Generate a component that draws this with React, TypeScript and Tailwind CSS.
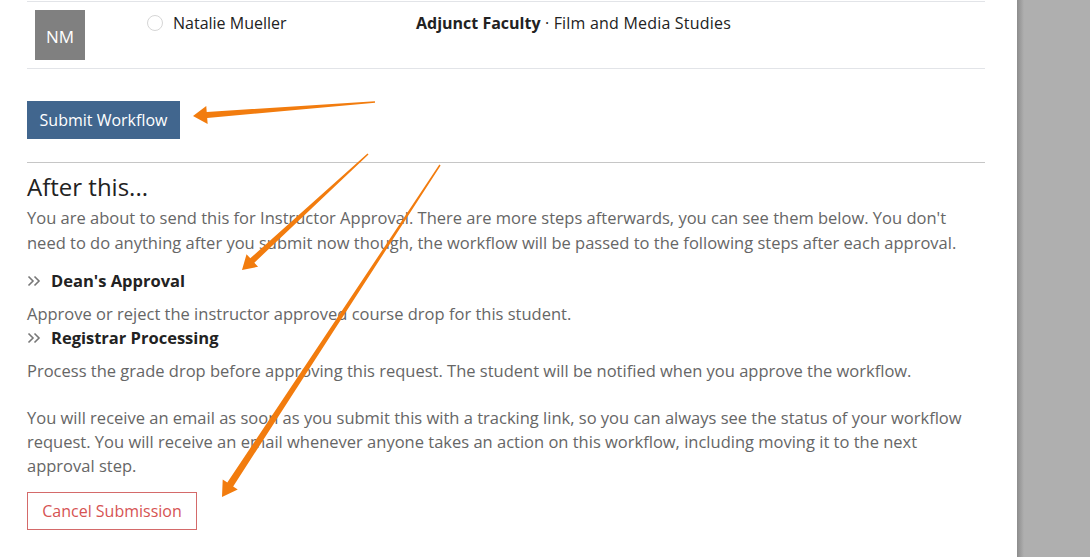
import React from 'react';

type Pt = [number, number];

// tapered annotation arrow: thin tail, wider shaft near head, triangular head
function arrowPoints(tail: Pt, tip: Pt, tailW: number, neckW: number, headW: number, headL: number) {
  const dx = tip[0] - tail[0];
  const dy = tip[1] - tail[1];
  const len = Math.hypot(dx, dy);
  const ux = dx / len;
  const uy = dy / len;
  const nx = -uy;
  const ny = ux;
  const neck: Pt = [tip[0] - ux * headL, tip[1] - uy * headL];
  const p = (base: Pt, w: number): string => `${base[0] + nx * w},${base[1] + ny * w}`;
  return [
    p(tail, tailW / 2),
    p(neck, neckW / 2),
    p(neck, headW / 2),
    `${tip[0]},${tip[1]}`,
    p(neck, -headW / 2),
    p(neck, -neckW / 2),
    p(tail, -tailW / 2),
  ].join(' ');
}

function Chevrons() {
  return (
    <svg width="14" height="12" viewBox="0 0 14 12" className="shrink-0">
      <path d="M1.5 1.5 L6 6 L1.5 10.5 M7.5 1.5 L12 6 L7.5 10.5" fill="none" stroke="#777" strokeWidth="1.6" />
    </svg>
  );
}

function Step({ title, text }: { title: string; text: string }) {
  return (
    <div>
      <div className="flex items-center gap-[10px] text-[16.5px] font-bold text-[#222] leading-[24px]">
        <Chevrons />
        <span>{title}</span>
      </div>
      <p className="mt-[8px]">{text}</p>
    </div>
  );
}

export default function App() {
  return (
    <div className="relative flex w-[1090px] h-[557px] overflow-hidden bg-white" style={{ fontFamily: '"Open Sans", "Liberation Sans", sans-serif' }}>
      <div className="w-[1017px] shrink-0 bg-white pl-[27px] pr-[32px]">
        <div className="mt-px h-[68px] border-y border-[#e2e4e8] flex items-start">
          <div className="ml-[8px] mt-[8px] w-[50px] h-[50px] bg-[#808080] text-white text-[17px] flex items-center justify-center pt-[4px]">
            NM
          </div>
          <div className="ml-[62px] mt-[9px] flex items-center gap-[10px] w-[269px]">
            <span className="w-[16px] h-[16px] rounded-full border border-[#d6d6d6]" />
            <span className="text-[16px] text-[#222]">Natalie Mueller</span>
          </div>
          <div className="mt-[9px] text-[16px] text-[#222]">
            <span className="font-bold">Adjunct Faculty</span>
            <span className="tracking-[0.2px]"> · Film and Media Studies</span>
          </div>
        </div>

        <button className="mt-[32px] h-[38px] w-[153px] bg-[#41668e] text-white text-[16px]">Submit Workflow</button>

        <div className="mt-[23px] border-t border-[#c6c6c6]" />

        <h2 className="mt-[9px] text-[24px] leading-[30px] text-[#222]">After this...</h2>

        <div className="text-[16.5px] leading-[25px] text-[#666]">
          <p className="mt-[3px]">
            You are about to send this for Instructor Approval. There are more steps afterwards, you can see them below. You don't
            <br />
            need to do anything after you submit now though, the workflow will be passed to the following steps after each approval.
          </p>
          <div className="mt-[14px] flex flex-col">
            <Step title="Dean's Approval" text="Approve or reject the instructor approved course drop for this student." />
            <Step title="Registrar Processing" text="Process the grade drop before approving this request. The student will be notified when you approve the workflow." />
          </div>
          <p className="mt-[23px] leading-[24px]">
            You will receive an email as soon as you submit this with a tracking link, so you can always see the status of your workflow
            <br />
            request. You will receive an email whenever anyone takes an action on this workflow, including moving it to the next
            <br />
            approval step.
          </p>
        </div>

        <button className="mt-[14px] h-[38px] w-[170px] border border-[#d46a6a] text-[#d65353] text-[16px]">Cancel Submission</button>
      </div>

      <div className="flex-1 bg-[linear-gradient(to_right,#8c8c8c,#afafaf_7px)]" />

      <svg className="absolute inset-0 pointer-events-none" width="1090" height="557">
        <polygon points={arrowPoints([375, 102], [193, 116], 1.5, 6, 18, 14)} fill="#f27c0e" />
        <polygon points={arrowPoints([368, 154], [242, 270], 1.5, 6, 17, 14)} fill="#f27c0e" />
        <polygon points={arrowPoints([440, 165], [222, 497], 1.5, 7, 18, 15)} fill="#f27c0e" />
      </svg>
    </div>
  );
}
